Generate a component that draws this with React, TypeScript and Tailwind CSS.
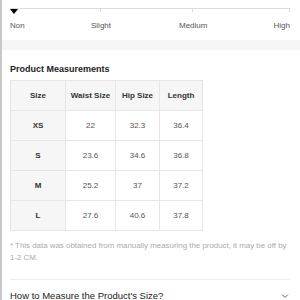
const rows = [
  { size: "XS", waist: "22", hip: "32.3", length: "36.4" },
  { size: "S", waist: "23.6", hip: "34.6", length: "36.8" },
  { size: "M", waist: "25.2", hip: "37", length: "37.2" },
  { size: "L", waist: "27.6", hip: "40.6", length: "37.8" },
];

export default function App() {
  return (
    <div className="w-screen h-screen overflow-hidden bg-white border-l-2 border-[#c8c8c8] font-['Liberation_Sans',Arial,sans-serif]">
      {/* stretch scale */}
      <div className="pt-[8px] pl-[8px] pr-[10px]">
        <div className="relative flex">
          <div className="w-[91px] h-[4px] border-t border-r border-[#dcdcdc]" />
          <div className="w-[92px] h-[4px] border-t border-r border-[#dcdcdc]" />
          <div className="flex-1 h-[4px] border-t border-r border-[#dcdcdc]" />
          <div className="absolute left-0 top-[1px] w-0 h-0 border-l-[4px] border-r-[4px] border-t-[5px] border-l-transparent border-r-transparent border-t-black" />
        </div>
        <div className="flex mt-[9px] h-[10px] text-[8px] leading-[10px] text-[#555]">
          <span className="w-[91px]">Non</span>
          <span className="w-[92px] -ml-[10px]">Slight</span>
          <span className="flex-1 -ml-[4px]">Medium</span>
          <span>High</span>
        </div>
      </div>

      <div className="mt-[9px] h-[10px] bg-[#f5f5f5]" />

      <div className="pl-[8px] pr-[10px]">
        <h2 className="mt-[13px] text-[9px] leading-[12px] font-bold text-[#222]">Product Measurements</h2>

        <table className="mt-[5px] border-collapse text-[8px] text-center">
          <thead>
            <tr className="h-[30px] bg-[#f6f6f6]">
              <th className="w-[55px] border border-[#e6e6e6] font-bold text-[#333]">Size</th>
              <th className="w-[50px] border border-[#e6e6e6] font-bold text-[#333]">Waist Size</th>
              <th className="w-[44px] border border-[#e6e6e6] font-bold text-[#333]">Hip Size</th>
              <th className="w-[43px] border border-[#e6e6e6] font-bold text-[#333]">Length</th>
            </tr>
          </thead>
          <tbody>
            {rows.map(r => (
              <tr key={r.size} className="h-[30px]">
                <td className="border border-[#e6e6e6] bg-[#f6f6f6] font-bold text-[#333]">{r.size}</td>
                <td className="border border-[#e6e6e6] text-[#555]">{r.waist}</td>
                <td className="border border-[#e6e6e6] text-[#555]">{r.hip}</td>
                <td className="border border-[#e6e6e6] text-[#555]">{r.length}</td>
              </tr>
            ))}
          </tbody>
        </table>

        <p className="mt-[9px] text-[7.9px] leading-[12px] text-[#aaa]">
          * This data was obtained from manually measuring the product, it may be off by 1-2 CM.
        </p>

        <div className="mt-[15px] border-t border-[#eee]" />

        <div className="mt-[10px] flex items-center justify-between">
          <span className="text-[9.5px] leading-[12px] text-[#222]">How to Measure the Product's Size?</span>
          <svg width="8" height="6" viewBox="0 0 8 6" className="mr-[1px]">
            <polyline points="1,1.5 4,4.5 7,1.5" fill="none" stroke="#666" strokeWidth="1" />
          </svg>
        </div>
      </div>
    </div>
  );
}
